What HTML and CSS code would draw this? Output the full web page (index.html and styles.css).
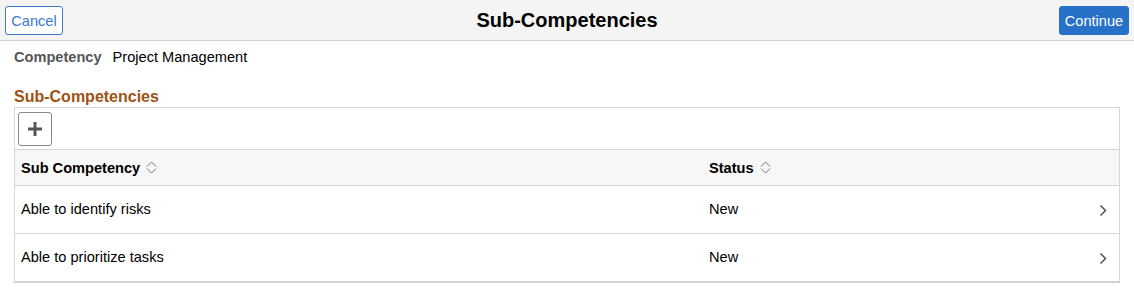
FILE: index.html
```html
<!DOCTYPE html>
<html>
<head>
<meta charset="utf-8">
<link rel="stylesheet" href="styles.css">
</head>
<body>
<div class="header">
  <button class="btn btn-cancel">Cancel</button>
  <div class="title">Sub-Competencies</div>
  <button class="btn btn-continue">Continue</button>
</div>
<div class="content">
  <div class="field">
    <span class="label">Competency</span>
    <span class="value">Project Management</span>
  </div>
  <div class="section-title">Sub-Competencies</div>
  <div class="grid">
    <div class="toolbar">
      <button class="add-btn" aria-label="Add">
        <svg width="16" height="16" viewBox="0 0 16 16"><path d="M6.5 1h3v5.5H15v3H9.5V15h-3V9.5H1v-3h5.5z" fill="#555"/></svg>
      </button>
    </div>
    <div class="row head">
      <div class="cell c1">Sub Competency <svg class="sort" width="11" height="13" viewBox="0 0 11 13"><path d="M1 5.5L5.5 1L10 5.5M1 7.5L5.5 12L10 7.5" fill="none" stroke="#777" stroke-width="1"/></svg></div>
      <div class="cell c2">Status <svg class="sort" width="11" height="13" viewBox="0 0 11 13"><path d="M1 5.5L5.5 1L10 5.5M1 7.5L5.5 12L10 7.5" fill="none" stroke="#777" stroke-width="1"/></svg></div>
      <div class="cell c3"></div>
    </div>
    <div class="row">
      <div class="cell c1">Able to identify risks</div>
      <div class="cell c2">New</div>
      <div class="cell c3"><svg width="8" height="13" viewBox="0 0 8 13"><path d="M1.5 1.5L6.5 6.5L1.5 11.5" fill="none" stroke="#555" stroke-width="1.5"/></svg></div>
    </div>
    <div class="row last">
      <div class="cell c1">Able to prioritize tasks</div>
      <div class="cell c2">New</div>
      <div class="cell c3"><svg width="8" height="13" viewBox="0 0 8 13"><path d="M1.5 1.5L6.5 6.5L1.5 11.5" fill="none" stroke="#555" stroke-width="1.5"/></svg></div>
    </div>
  </div>
</div>
</body>
</html>
```
FILE: styles.css
```css
* { box-sizing: border-box; }
body {
  margin: 0;
  font-family: "Liberation Sans", Arial, sans-serif;
  font-size: 14.6px;
  color: #000;
  background: #fff;
}
.header {
  height: 41px;
  background: #f4f4f4;
  border-bottom: 1px solid #cfd3d8;
  display: grid;
  grid-template-columns: 1fr auto 1fr;
  align-items: center;
  padding: 0 5px 0 5px;
}
.btn {
  font-family: "Liberation Sans", Arial, sans-serif;
  font-size: 14.6px;
  height: 29px;
  border-radius: 3px;
  padding: 0 4px;
  margin-top: 1px;
  cursor: pointer;
}
.btn-cancel {
  width: 58px;
  background: #fff;
  color: #3a7ad0;
  border: 1px solid #3a7ad0;
  justify-self: start;
}
.btn-continue {
  width: 70px;
  background: #2771c9;
  color: #fff;
  border: 1px solid #2771c9;
  justify-self: end;
}
.title {
  font-size: 20px;
  font-weight: bold;
  color: #000;
  margin-left: 0;
}
.content {
  padding: 0 14px;
}
.field {
  margin-top: 7px;
  line-height: 18px;
  display: flex;
  gap: 11px;
}
.label {
  font-weight: bold;
  color: #555;
}
.section-title {
  margin-top: 22px;
  font-size: 16px;
  font-weight: bold;
  color: #9e5214;
  line-height: 18px;
  margin-bottom: 1px;
}
.grid {
  border: 1px solid #d3d6da;
  border-bottom: 2px solid #cfd3d8;
}
.toolbar {
  height: 42px;
  padding: 4px 3px;
  border-bottom: 1px solid #d3d6da;
}
.add-btn {
  width: 34px;
  height: 34px;
  background: #fff;
  border: 1px solid #8a8a8a;
  border-radius: 3px;
  display: flex;
  align-items: center;
  justify-content: center;
  padding: 0;
}
.row {
  display: grid;
  grid-template-columns: 694px 1fr 40px;
  height: 48px;
  border-bottom: 1px solid #d3d6da;
  align-items: center;
}
.row.last { border-bottom: none; height: 47px; }
.row.head {
  height: 36px;
  background: #f7f7f7;
  font-weight: bold;
}
.cell.c1 { padding-left: 6px; }
.row:not(.head) .c1, .row:not(.head) .c2 { padding-bottom: 2px; }
.row.head .cell { display: flex; align-items: center; gap: 6px; }
.cell.c3 { display: flex; align-items: center; padding-left: 20px; padding-top: 1px; }
.sort { margin-top: -1px; }
```
